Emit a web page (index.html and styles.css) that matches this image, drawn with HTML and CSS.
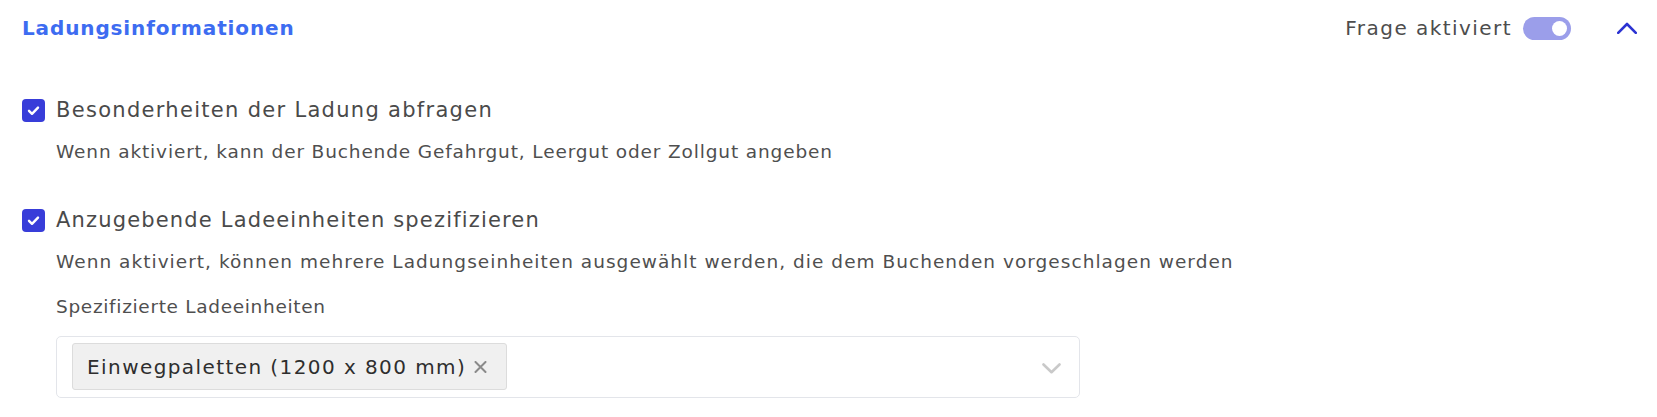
FILE: index.html
```html
<!DOCTYPE html>
<html lang="de">
<head>
<meta charset="utf-8">
<title>Ladungsinformationen</title>
<link rel="stylesheet" href="styles.css">
</head>
<body>
<section class="panel">
  <header class="panel-header">
    <h2 class="panel-title">Ladungsinformationen</h2>
    <div class="panel-actions">
      <span class="toggle-label">Frage aktiviert</span>
      <span class="toggle"><span class="toggle-knob"></span></span>
      <svg class="collapse-icon" width="20" height="12" viewBox="0 0 20 12"><path d="M1.2 10.8 L10 2 L18.8 10.8" fill="none" stroke="#2c33d2" stroke-width="2.6" stroke-linecap="round" stroke-linejoin="round"/></svg>
    </div>
  </header>

  <div class="options">
    <div class="option">
      <label class="option-head">
        <span class="checkbox"><svg width="23" height="23" viewBox="0 0 23 23"><path d="M7 11.8 L10 14.8 L16 8.6" fill="none" stroke="#fff" stroke-width="2.4" stroke-linecap="round" stroke-linejoin="round"/></svg></span>
        <span class="option-label">Besonderheiten der Ladung abfragen</span>
      </label>
      <p class="option-desc">Wenn aktiviert, kann der Buchende Gefahrgut, Leergut oder Zollgut angeben</p>
    </div>

    <div class="option option-second">
      <label class="option-head">
        <span class="checkbox"><svg width="23" height="23" viewBox="0 0 23 23"><path d="M7 11.8 L10 14.8 L16 8.6" fill="none" stroke="#fff" stroke-width="2.4" stroke-linecap="round" stroke-linejoin="round"/></svg></span>
        <span class="option-label option-label-tight">Anzugebende Ladeeinheiten spezifizieren</span>
      </label>
      <p class="option-desc option-desc-wide">Wenn aktiviert, können mehrere Ladungseinheiten ausgewählt werden, die dem Buchenden vorgeschlagen werden</p>

      <div class="field">
        <div class="field-label">Spezifizierte Ladeeinheiten</div>
        <div class="select">
          <span class="tag">Einwegpaletten (1200 x 800 mm)<svg class="tag-remove" width="13" height="12" viewBox="0 0 13 12"><path d="M1.5 1 L11.5 11 M11.5 1 L1.5 11" stroke="#8a8a8a" stroke-width="2" stroke-linecap="round"/></svg></span>
          <svg class="select-arrow" width="19" height="11" viewBox="0 0 19 11"><path d="M1.5 1.5 L9.5 9.2 L17.5 1.5" fill="none" stroke="#c9c9c9" stroke-width="2.6" stroke-linecap="round" stroke-linejoin="round"/></svg>
        </div>
      </div>
    </div>
  </div>
</section>
</body>
</html>
```
FILE: styles.css
```css
* { box-sizing: border-box; }

html, body {
  margin: 0;
  background: #ffffff;
}

body {
  font-family: "DejaVu Sans", "Noto Sans", sans-serif;
  color: #4a4a4a;
}

.panel {
  padding: 0 20px 0 22px;
}

.panel-header {
  height: 56px;
  display: flex;
  align-items: center;
  justify-content: space-between;
}

.panel-title {
  margin: 0;
  font-size: 20px;
  line-height: 28px;
  font-weight: 600;
  letter-spacing: 0.87px;
  color: #3d6cf1;
}

.panel-actions {
  display: flex;
  align-items: center;
}

.toggle-label {
  font-size: 20px;
  line-height: 28px;
  letter-spacing: 1.45px;
  color: #4d4d4d;
  margin-right: 11px;
}

.toggle {
  width: 48px;
  height: 23px;
  border-radius: 12px;
  background: #9b9eea;
  display: flex;
  align-items: center;
  justify-content: flex-end;
  padding-right: 4px;
}

.toggle-knob {
  width: 15px;
  height: 15px;
  border-radius: 50%;
  background: #ffffff;
}

.collapse-icon {
  margin-left: 46px;
  display: block;
}

.options {
  padding-top: 42px;
}

.option-head {
  display: flex;
  align-items: center;
  height: 24px;
}

.checkbox {
  width: 23px;
  height: 23px;
  border-radius: 4px;
  background: #383dd9;
  display: flex;
  flex-shrink: 0;
}

.option-label {
  margin-left: 11px;
  font-size: 21px;
  line-height: 24px;
  letter-spacing: 1.3px;
  color: #4a4a4a;
}

.option-label-tight {
  letter-spacing: 1.17px;
}

.option-desc {
  margin: 18px 0 0 34px;
  font-size: 18.5px;
  line-height: 24px;
  letter-spacing: 0.86px;
  color: #4f4f4f;
}

.option-desc-wide {
  letter-spacing: 1.03px;
}

.option-second {
  margin-top: 44px;
}

.field {
  margin: 21px 0 0 34px;
}

.field-label {
  font-size: 18.5px;
  line-height: 24px;
  letter-spacing: 0.68px;
  color: #4f4f4f;
}

.select {
  margin-top: 17px;
  width: 1024px;
  height: 62px;
  border: 1px solid #e3e5ea;
  border-radius: 5px;
  padding: 6px 18px 0 15px;
  display: flex;
  align-items: flex-start;
  justify-content: space-between;
}

.tag {
  height: 47px;
  display: flex;
  align-items: center;
  padding: 0 19px 0 14px;
  background: #f0f0f0;
  border: 1px solid #dcdcdc;
  border-radius: 3px;
  font-size: 20px;
  letter-spacing: 1.42px;
  color: #2e2e2e;
}

.tag-remove {
  margin-left: 8px;
  display: block;
}

.select-arrow {
  display: block;
  margin-top: 20px;
}
```
